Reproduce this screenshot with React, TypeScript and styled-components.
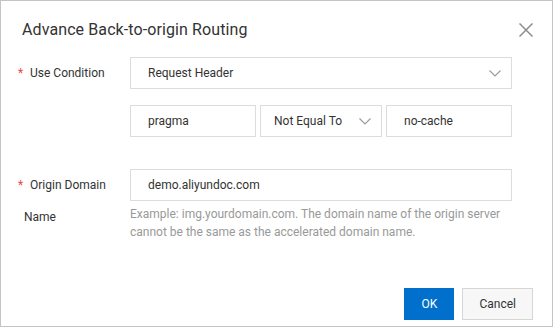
import styled, { createGlobalStyle } from "styled-components";

const GlobalStyle = createGlobalStyle`
  html, body {
    margin: 0;
    padding: 0;
    background: #fff;
  }
  body {
    font-family: Roboto, "Liberation Sans", Arial, sans-serif;
    color: #333;
  }
`;

const Dialog = styled.div`
  box-sizing: border-box;
  width: 553px;
  height: 327px;
  border: 1px solid #c4c4c4;
  background: #fff;
  display: flex;
  flex-direction: column;
`;

const Header = styled.div`
  display: flex;
  align-items: center;
  justify-content: space-between;
  padding: 17px 19px 0 21px;
  height: 24px;
`;

const Title = styled.h2`
  margin: 0;
  font-size: 16px;
  font-weight: 400;
  line-height: 24px;
  letter-spacing: 0.1px;
  color: #333;
`;

const CloseButton = styled.button`
  border: 0;
  background: none;
  padding: 0;
  width: 14px;
  height: 14px;
  display: flex;
  cursor: pointer;
`;

const Body = styled.div`
  flex: 1;
  padding: 15px 40px 0 0;
  display: flex;
  flex-direction: column;
`;

const FormRow = styled.div<{ mb: number }>`
  display: flex;
  margin-bottom: ${(p) => p.mb}px;
`;

const Label = styled.label`
  box-sizing: border-box;
  width: 129px;
  flex-shrink: 0;
  padding: 0 12px 0 23px;
  text-indent: -6px;
  font-size: 12px;
  line-height: 32px;
  color: #333;
`;

const Required = styled.span`
  display: inline-block;
  width: 12px;
  text-indent: 0;
  color: #f04545;
`;

const Control = styled.div`
  flex: 1;
  display: flex;
  flex-direction: column;
`;

const Inline = styled.div`
  display: flex;
  gap: 4px;
`;

const Box = styled.div<{ $pl?: number; $grow?: boolean }>`
  box-sizing: border-box;
  height: 32px;
  flex: ${(p) => (p.$grow ? "1 1 0" : "none")};
  min-width: 0;
  border: 1px solid #dcdcdc;
  display: flex;
  align-items: center;
  justify-content: space-between;
  padding: 0 10px 0 ${(p) => p.$pl ?? 17}px;
  font-size: 12px;
  color: #333;
`;

const Help = styled.div`
  margin-top: 4px;
  font-size: 12px;
  line-height: 18px;
  color: #999;
`;

const Footer = styled.div`
  display: flex;
  justify-content: flex-end;
  gap: 8px;
  padding: 0 19px 6px 0;
`;

const Button = styled.button<{ $primary?: boolean }>`
  box-sizing: border-box;
  height: 32px;
  padding: 0 16px;
  min-width: ${(p) => (p.$primary ? 50 : 69)}px;
  font-family: inherit;
  font-size: 12px;
  border: 1px solid ${(p) => (p.$primary ? "#0070cc" : "#d6d6d6")};
  background: ${(p) => (p.$primary ? "#0070cc" : "#f7f7f7")};
  color: ${(p) => (p.$primary ? "#fff" : "#333")};
  cursor: pointer;
`;

function Chevron() {
  return (
    <svg width="12" height="7" viewBox="0 0 12 7" fill="none">
      <polyline points="0.5,0.5 6,6 11.5,0.5" stroke="#999" strokeWidth="1.1" />
    </svg>
  );
}

function CloseIcon() {
  return (
    <svg width="14" height="14" viewBox="0 0 14 14">
      <line x1="0.5" y1="0.5" x2="13.5" y2="13.5" stroke="#8c8c8c" strokeWidth="1.5" />
      <line x1="13.5" y1="0.5" x2="0.5" y2="13.5" stroke="#8c8c8c" strokeWidth="1.5" />
    </svg>
  );
}

export default function App() {
  return (
    <>
      <GlobalStyle />
      <Dialog>
        <Header>
          <Title>Advance Back-to-origin Routing</Title>
          <CloseButton aria-label="Close">
            <CloseIcon />
          </CloseButton>
        </Header>
        <Body>
          <FormRow mb={16}>
            <Label>
              <Required>*</Required>Use Condition
            </Label>
            <Control>
              <Box>
                Request Header
                <Chevron />
              </Box>
            </Control>
          </FormRow>
          <FormRow mb={32}>
            <Label />
            <Control>
              <Inline>
                <Box $grow>pragma</Box>
                <Box $grow $pl={13}>
                  Not Equal To
                  <Chevron />
                </Box>
                <Box $grow>no-cache</Box>
              </Inline>
            </Control>
          </FormRow>
          <FormRow mb={0}>
            <Label>
              <Required>*</Required>Origin Domain Name
            </Label>
            <Control>
              <Box>demo.aliyundoc.com</Box>
              <Help>
                Example: img.yourdomain.com. The domain name of the origin server cannot be the
                same as the accelerated domain name.
              </Help>
            </Control>
          </FormRow>
        </Body>
        <Footer>
          <Button $primary>OK</Button>
          <Button>Cancel</Button>
        </Footer>
      </Dialog>
    </>
  );
}
